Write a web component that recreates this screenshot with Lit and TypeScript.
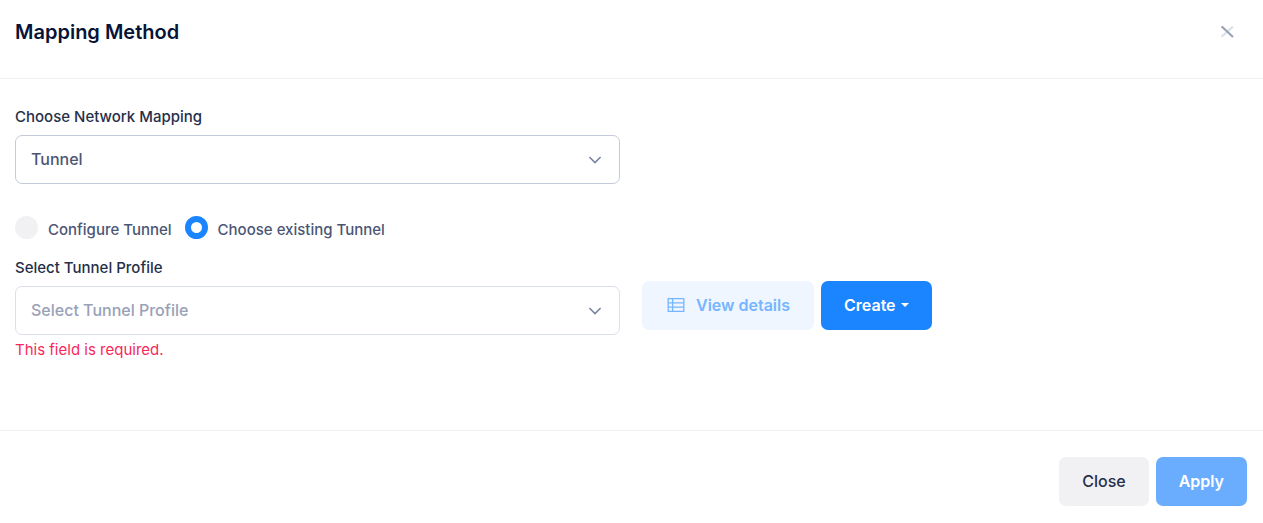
import { LitElement, html, css, svg } from "lit";
import { customElement, state } from "lit/decorators.js";

const chevron = html`<svg class="chevron" viewBox="0 0 14 8" width="14" height="8" aria-hidden="true">
  ${svg`<path d="M1.4 1 L7 6.6 L12.6 1" fill="none" stroke="currentColor" stroke-width="1.5" />`}
</svg>`;

@customElement("app-root")
export class AppRoot extends LitElement {
  static styles = css`
    :host {
      display: block;
      font-family: Inter, sans-serif;
      font-size: 16px;
      font-weight: 500;
      line-height: 24px;
      color: #4d5875;
      background: #fff;
    }
    * {
      box-sizing: border-box;
    }
    button,
    select {
      font: inherit;
    }
    header {
      display: flex;
      align-items: flex-start;
      justify-content: space-between;
      padding: 20px 29px 34px 15px;
      border-bottom: 1px solid #f0f0f2;
    }
    h2 {
      margin: 0;
      font-size: 20px;
      font-weight: 600;
      line-height: 24px;
      color: #071437;
    }
    .dismiss {
      display: flex;
      padding: 6px 0;
      border: 0;
      background: none;
      cursor: pointer;
    }
    .body {
      padding: 28px 16px 70px 15px;
    }
    .row {
      display: grid;
      grid-template-columns: 1fr 1fr;
      column-gap: 22px;
    }
    .label {
      display: block;
      font-size: 15px;
      line-height: 20px;
      margin-bottom: 8px;
      color: #252f4a;
    }
    .select {
      display: grid;
      align-items: center;
    }
    .select > * {
      grid-area: 1 / 1;
    }
    select {
      appearance: none;
      width: 100%;
      height: 49px;
      padding: 0 44px 2px 15px;
      border: 1px solid #dbdfe9;
      border-radius: 7px;
      background: #fff;
      color: #4b5675;
    }
    select.filled {
      border-color: #c4cada;
    }
    select.empty {
      color: #99a1b7;
    }
    .chevron {
      justify-self: end;
      margin-right: 18px;
      pointer-events: none;
      color: #78829d;
    }
    .choices {
      display: flex;
      gap: 13px;
      margin: 32px 0 19px;
      padding: 0;
      border: 0;
    }
    .choice {
      display: flex;
      gap: 10px;
      font-size: 15px;
      line-height: 27px;
      height: 23px;
      color: #4b5675;
    }
    input {
      appearance: none;
      flex: none;
      width: 23px;
      height: 23px;
      margin: 0;
      border-radius: 50%;
      background: #f1f1f4;
    }
    input:checked {
      background: #fff;
      border: 6px solid #1b84ff;
    }
    .error {
      margin: 5px 0 0;
      font-size: 15px;
      font-weight: 400;
      line-height: 20px;
      color: #f8285a;
    }
    .actions {
      display: flex;
      align-items: flex-start;
      gap: 7px;
      padding-top: 23px;
    }
    .btn {
      display: flex;
      align-items: center;
      justify-content: center;
      height: 49px;
      padding: 0 23px 2px;
      border: 0;
      border-radius: 7px;
      font-weight: 600;
      cursor: pointer;
      white-space: nowrap;
    }
    .view {
      gap: 11px;
      padding: 0 24px 2px;
      background: #eff6ff;
      color: #76b5ff;
    }
    .create {
      gap: 5px;
      background: #1b84ff;
      color: #fff;
    }
    .close {
      background: #f1f1f4;
      color: #252f4a;
      font-weight: 500;
    }
    .apply {
      background: #6aadff;
      color: #fff;
    }
    footer {
      display: flex;
      justify-content: flex-end;
      gap: 7px;
      padding: 26px 16px 17px;
      border-top: 1px solid #f0f0f2;
    }
  `;

  @state() private mode = "existing";

  render() {
    return html`
      <header>
        <h2>Mapping Method</h2>
        <button class="dismiss" aria-label="Close dialog">
          <svg width="13" height="12" viewBox="0 0 13 12" aria-hidden="true">
            <path d="M.6 10.8 L12 .6" stroke="#dde0e9" stroke-width="2.2" />
            <path d="M.6 .4 L12 11" stroke="#99a1b7" stroke-width="2.2" />
          </svg>
        </button>
      </header>
      <div class="body">
        <div class="row">
          <div>
            <label class="label" for="mapping">Choose Network Mapping</label>
            <div class="select">
              <select id="mapping" class="filled">
                <option>Tunnel</option>
              </select>
              ${chevron}
            </div>
          </div>
        </div>
        <div class="choices" role="radiogroup" aria-label="Tunnel source">
          ${this.choice("configure", "Configure Tunnel")}
          ${this.choice("existing", "Choose existing Tunnel")}
        </div>
        <div class="row">
          <div>
            <label class="label" for="profile">Select Tunnel Profile</label>
            <div class="select">
              <select id="profile" class="empty" aria-describedby="profile-error">
                <option value="">Select Tunnel Profile</option>
              </select>
              ${chevron}
            </div>
            <p class="error" id="profile-error">This field is required.</p>
          </div>
          <div class="actions">
            <button class="btn view" disabled>
              <svg width="19" height="17" viewBox="0 0 19 17" fill="none" stroke="currentColor" stroke-width="1.3" aria-hidden="true">
                <path d="M2.2 2.6 H17.8 V15.4 H2.2 Z M2.2 6.9 H17.8 M2.2 11.1 H17.8 M6.6 2.6 V15.4" />
              </svg>
              View details
            </button>
            <button class="btn create" aria-haspopup="menu">
              Create
              <svg width="8" height="4" viewBox="0 0 8 4" aria-hidden="true">
                <path d="M0 0 H8 L4 4 Z" fill="currentColor" />
              </svg>
            </button>
          </div>
        </div>
      </div>
      <footer>
        <button class="btn close">Close</button>
        <button class="btn apply" disabled>Apply</button>
      </footer>
    `;
  }

  private choice(value: string, text: string) {
    return html`<label class="choice">
      <input
        type="radio"
        name="mode"
        .value=${value}
        .checked=${this.mode === value}
        @change=${() => (this.mode = value)}
      />
      ${text}
    </label>`;
  }
}
